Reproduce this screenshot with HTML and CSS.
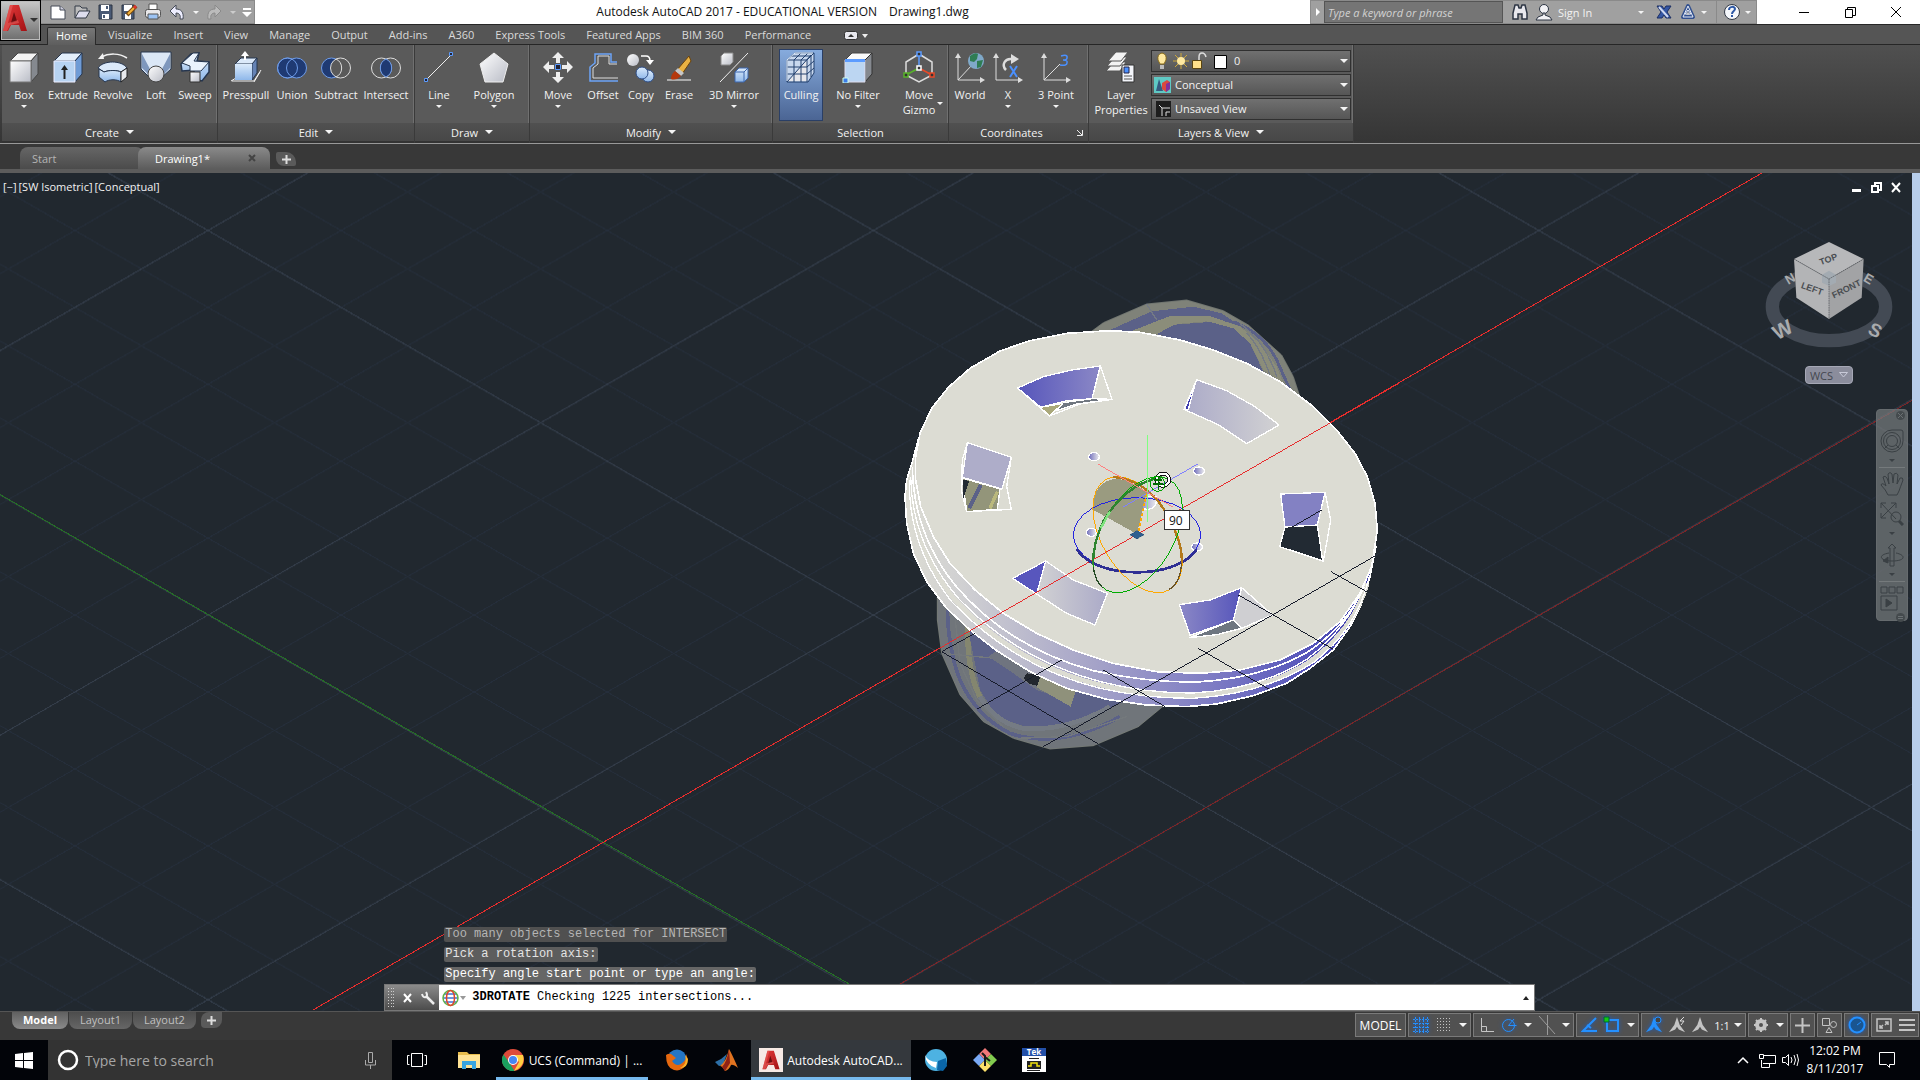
FILE: index.html
```html
<!DOCTYPE html>
<html lang="en">
<head>
<meta charset="utf-8">
<title>Autodesk AutoCAD 2017 - Drawing1.dwg</title>
<link rel="stylesheet" href="styles.css">
</head>
<body>
<svg class="defs" width="0" height="0" aria-hidden="true">
  <defs>
    <linearGradient id="grey" x1="0" y1="0" x2="1" y2="1"><stop offset="0" stop-color="#fff"/><stop offset="1" stop-color="#b9bcc6"/></linearGradient>
    <linearGradient id="blue" x1="0" y1="0" x2="0" y2="1"><stop offset="0" stop-color="#dcebfb"/><stop offset="1" stop-color="#8fb8ea"/></linearGradient>
    <linearGradient id="logo" x1="0" y1="0" x2="1" y2="1"><stop offset="0" stop-color="#e63a3a"/><stop offset="1" stop-color="#a31215"/></linearGradient>
    <symbol id="acad" viewBox="0 0 24 28"><path fill="url(#logo)" d="M7 1h9l8 26h-6l-2-6H8l-3 6H0z"/><path fill="#6d0d10" d="M11 8l3 9-6 2z"/><path fill="#ee6a66" d="M7 1h3L5 19l10-3 1 3-9 2-3 6H0z" opacity=".5"/></symbol>
    <symbol id="anno" viewBox="0 0 20 20"><path d="M10 1l3 9 6 8-7-3-2-3-2 3-7 3 6-8z"/></symbol>
  </defs>
</svg>
<div class="app">
  <header class="titlebar">
    <button class="app-menu" aria-label="Application menu"><svg width="24" height="28"><use href="#acad"/></svg><i class="tri dark"></i></button>
    <div class="quick">
      <button aria-label="New"><svg width="18" height="18" viewBox="0 0 18 18"><path fill="#fff" stroke="#444b57" d="M2 3h9l5 4v9H2z"/><path fill="#ccd" stroke="#444b57" d="M11 3v4h5"/></svg></button>
      <button aria-label="Open"><svg width="18" height="18" viewBox="0 0 18 18"><path fill="#bbb" stroke="#333a46" d="M2 15V3h5l2 2h5v3"/><path fill="#dde" stroke="#333a46" d="M2 15l4-7h11l-4 7z"/></svg></button>
      <button aria-label="Save"><svg width="18" height="18" viewBox="0 0 18 18"><path fill="#4a5a75" stroke="#2c3443" d="M3 2h13v14H3z"/><path fill="#fff" d="M5 2h8v6H5zM6 11h7v5H6z"/><path fill="#4a5a75" d="M10 3h2v3h-2zM7 12h2v3H7z"/></svg></button>
      <button aria-label="Save as"><svg width="18" height="18" viewBox="0 0 18 18"><path fill="#4a5a75" stroke="#2c3443" d="M2 2h12v14H2z"/><path fill="#fff" d="M4 2h8v6H4zM5 11h6v5H5z"/><path stroke="#7a4a10" stroke-width="4" d="M7 12l9-9"/><path stroke="#f3b33a" stroke-width="2" d="M8 11l6-6"/><path stroke="#d33" stroke-width="3" d="M14 5l2-2"/></svg></button>
      <button aria-label="Plot"><svg width="18" height="18" viewBox="0 0 18 18"><path fill="#fff" stroke="#555" d="M5 1h8v6H5z"/><rect x="1.500" y="6.500" width="15" height="8" rx="2" fill="#e8e8ea" stroke="#555"/><path fill="#9cc3f3" stroke="#555" d="M4 11h10v5H4z"/></svg></button>
      <button aria-label="Undo"><svg width="18" height="18" viewBox="0 0 18 18"><path fill="#eef" stroke="#444b57" d="M2 8l6-6v4c5 0 8 3 7 10h-3c1-4-1-6-4-6v4z"/></svg></button>
      <button class="slim" aria-label="Undo list"><i class="tri"></i></button>
      <button aria-label="Redo"><svg width="18" height="18" viewBox="0 0 18 18"><path fill="#bbb" stroke="#8a8a8a" d="M16 8l-6-6v4c-5 0-8 3-7 10h3c-1-4 1-6 4-6v4z"/></svg></button>
      <button class="slim" aria-label="Redo list"><i class="tri dim"></i></button>
      <button class="slim" aria-label="Customize toolbar"><svg width="10" height="9" viewBox="0 0 10 9"><path fill="#fff" d="M1 0h8v2H1zM0 4h10L5 9z"/></svg></button>
    </div>
    <h1 class="title">Autodesk AutoCAD 2017 - EDUCATIONAL VERSION<span>Drawing1.dwg</span></h1>
    <div class="info">
      <i class="tri right"></i>
      <input type="text" aria-label="Search help" placeholder="Type a keyword or phrase">
      <button aria-label="Search"><svg width="18" height="18" viewBox="0 0 18 18"><path fill="#e8e8ee" stroke="#2c3443" stroke-width="1.500" d="M4 2h3l1 3h2l1-3h3l2 8v6h-5v-5H7v5H2v-6z"/></svg></button>
      <button class="sign"><svg width="18" height="18" viewBox="0 0 18 18"><circle cx="9" cy="6" r="4.500" fill="#f1f1f5" stroke="#2c3443"/><path fill="#f1f1f5" stroke="#2c3443" d="M1 17l2-3 5-2v-2h2v2l5 2 2 3z"/></svg><span>Sign In</span><i class="tri"></i></button>
      <button aria-label="Exchange"><svg width="18" height="18" viewBox="0 0 18 18"><path fill="#3557a5" stroke="#1d2f63" d="M2 3h5l2 3 2-3h5l-4 6 4 6h-5l-2-3-2 3H2l4-6z"/><path stroke="#cfd9f2" stroke-width="2" d="M4 4l9 10"/></svg></button>
      <button class="with-list" aria-label="A360"><svg width="18" height="18" viewBox="0 0 18 18"><path fill="none" stroke="#33518f" stroke-width="4" stroke-linejoin="round" d="M9 3l5 11H4z"/><path fill="none" stroke="#e6ecf8" d="M9 3l5 11H4zM6 11l3-4 3 4z"/></svg><i class="tri"></i></button>
      <button class="with-list help" aria-label="Help"><svg width="18" height="18" viewBox="0 0 18 18"><circle cx="9" cy="9" r="7.500" fill="#f5f7fb" stroke="#333a46"/><path fill="none" stroke="#2c57a5" stroke-width="2" d="M6 7c0-4 6-4 6-1 0 2-3 2-3 5M9 12v2"/></svg><i class="tri"></i></button>
    </div>
    <div class="window-buttons">
      <button aria-label="Minimize"><svg width="11" height="11"><path stroke="#000" d="M0 5.500h10"/></svg></button>
      <button aria-label="Restore"><svg width="11" height="11"><path fill="none" stroke="#000" d="M.5 2.500h7v8h-7zM2.500 2V.5h8v8H8"/></svg></button>
      <button aria-label="Close"><svg width="11" height="11"><path stroke="#000" d="M0 0l10 10M10 0L0 10"/></svg></button>
    </div>
  </header>

  <nav class="ribbon-tabs" aria-label="Ribbon">
    <a class="active" href="#home">Home</a><a href="#visualize">Visualize</a><a href="#insert">Insert</a><a href="#view">View</a><a href="#manage">Manage</a><a href="#output">Output</a><a href="#addins">Add-ins</a><a href="#a360">A360</a><a href="#express">Express Tools</a><a href="#featured">Featured Apps</a><a href="#bim">BIM 360</a><a href="#performance">Performance</a>
    <button aria-label="Minimize ribbon"><svg width="24" height="10" viewBox="0 0 24 10"><rect x=".5" y=".5" width="13" height="8" rx="2" fill="#e8e8ee" stroke="#333"/><path fill="#333" d="M4 6h6L7 3z"/><path fill="#eee" d="M18 3h6l-3 4z"/></svg></button>
  </nav>

  <div class="ribbon">
    <section class="panel create">
      <div class="tools">
        <button><svg width="32" height="32" viewBox="0 0 32 32"><path fill="#f3f3f3" stroke="#444" d="M2 10l8-8h20l-7 8z"/><path fill="#85898f" stroke="#444" d="M23 10l7-8v21l-7 8z"/><path fill="url(#grey)" stroke="#777" d="M2 10h21v21H2z"/></svg>Box<i class="tri"></i></button>
        <button><svg width="32" height="32" viewBox="0 0 32 32"><path fill="#e3effc" stroke="#26364f" d="M2 10l8-8h20l-7 8z"/><path fill="#6f9bd6" stroke="#26364f" d="M23 10l7-8v21l-7 8z"/><path fill="#b7d3f2" stroke="#eef" d="M2 10h21v21H2z"/><path stroke="#222" stroke-width="2" d="M12.500 28V16"/><path fill="#222" d="M9 19l3.500-5 3.500 5z"/></svg>Extrude</button>
        <button><svg width="32" height="32" viewBox="0 0 32 32"><path fill="none" stroke="#f2f2f2" stroke-width="1.500" d="M4 6c8-4 18-4 26 1"/><path fill="#f2f2f2" d="M1 8l5-6 1 6z"/><path fill="#dbe9f9" stroke="#26364f" d="M1 17c5-8 24-8 29 0l-6 4c-4-2-12-2-17 0z"/><path fill="url(#blue)" stroke="#26364f" d="M2 18l5 3c5-2 13-2 17 0v10c-4-3-12-3-16 0l-6-5z"/><path fill="#e8eaee" stroke="#222" d="M24 21l6-4v9l-6 5z"/></svg>Revolve</button>
        <button><svg width="32" height="32" viewBox="0 0 32 32"><path fill="#dbe7f6" stroke="#26364f" d="M1 1h30v17l-10 9-5-10-6 10-9-9z"/><path fill="#7e97bd" d="M2 3l8 15-2 5-6-6zM30 3l-8 15 2 5 6-6z"/><circle cx="16" cy="23" r="8" fill="url(#grey)" stroke="#444"/></svg>Loft</button>
        <button><svg width="32" height="32" viewBox="0 0 32 32"><path fill="url(#blue)" stroke="#26364f" stroke-width="1.500" d="M2 13l10-10 8-1-2 8 12 1v10l-7 9-8-2v-9L3 20z"/><path fill="#eaf3fd" stroke="#26364f" d="M3 12L14 2h6l-5 8 15 1-8 9H11v-5z"/><path fill="url(#grey)" stroke="#333" d="M11 21h10v10H11z"/></svg>Sweep</button>
      </div>
      <button class="panel-title">Create<i class="tri big"></i></button>
    </section>
    <section class="panel edit">
      <div class="tools">
        <button><svg width="32" height="32" viewBox="0 0 32 32"><path fill="none" stroke="#f2f2f2" d="M1 30l5-3M2 30h22l7-11M24 31l6-10"/><path fill="#dbe9f9" stroke="#26364f" d="M5 13l6-6h16l-4 6z"/><path fill="#6583b5" stroke="#26364f" d="M22 13l5-6v15l-5 7z"/><path fill="url(#blue)" d="M5 13h17v16H5z"/><path stroke="#fff" stroke-width="2" d="M15 9V3"/><path fill="#fff" d="M11 5l4-5 4 5z"/></svg>Presspull</button>
        <button><svg width="32" height="32" viewBox="0 0 32 32"><g fill="#1f3a73" stroke="#6d9be8"><circle cx="11.500" cy="17" r="10"/><circle cx="20.500" cy="17" r="10"/></g><circle cx="11.500" cy="17" r="10" fill="none" stroke="#6d9be8"/></svg>Union</button>
        <button><svg width="32" height="32" viewBox="0 0 32 32"><circle cx="11.500" cy="17" r="10" fill="#1f3a73" stroke="#6d9be8"/><circle cx="20.500" cy="17" r="10" fill="#5a5a5a" stroke="#ddd"/><path fill="none" stroke="#ddd" d="M16 8a10 10 0 0 1 0 18"/></svg>Subtract</button>
        <button><svg width="32" height="32" viewBox="0 0 32 32"><g fill="none" stroke="#ddd"><circle cx="11.500" cy="17" r="10"/><circle cx="20.500" cy="17" r="10"/></g><path fill="#1f3a73" stroke="#6d9be8" d="M16 8a10 10 0 0 1 0 18a10 10 0 0 1 0-18"/></svg>Intersect</button>
      </div>
      <button class="panel-title">Edit<i class="tri big"></i></button>
    </section>
    <section class="panel draw">
      <div class="tools">
        <button><svg width="32" height="32" viewBox="0 0 32 32"><path stroke="#eee" d="M3 29L29 3"/><path fill="#223" stroke="#5c9cff" d="M1.500 27.500h3v3h-3zM26.500 1.500h3v3h-3z"/></svg>Line<i class="tri"></i></button>
        <button><svg width="32" height="32" viewBox="0 0 32 32"><path fill="url(#grey)" stroke="#eee" d="M16 2l14 11-5 18H7L2 13z"/></svg>Polygon<i class="tri"></i></button>
      </div>
      <button class="panel-title">Draw<i class="tri big"></i></button>
    </section>
    <section class="panel modify">
      <div class="tools">
        <button><svg width="32" height="32" viewBox="0 0 32 32"><path fill="#eee" d="M16 1l6 6h-4v5h-4V7h-4zM16 32l6-6h-4v-5h-4v5h-4zM1 16l6-6v4h5v4H7v4zM31 16l-6-6v4h-5v4h5v4z"/><path fill="#223" stroke="#5c9cff" d="M13.500 13.500h5v5h-5z"/></svg>Move<i class="tri"></i></button>
        <button><svg width="32" height="32" viewBox="0 0 32 32"><path fill="none" stroke="#6ca4f7" stroke-width="1.500" d="M30 11h-6V3H8v9l-5 4v14h28"/><path fill="none" stroke="#ddd" d="M30 13h-8V5H11v8l-5 4v10h25"/></svg>Offset</button>
        <button><svg width="32" height="32" viewBox="0 0 32 32"><circle cx="8" cy="9" r="6" fill="url(#grey)"/><path fill="none" stroke="#fff" stroke-width="1.500" d="M16 5h5q4 0 4 5"/><path fill="#fff" d="M21 9h8l-4 5z"/><g fill="url(#blue)" stroke="#2d4d86"><circle cx="23" cy="25" r="6"/><circle cx="17" cy="22" r="6"/></g></svg>Copy</button>
        <button><svg width="32" height="32" viewBox="0 0 32 32"><path stroke="#aaa" stroke-width="2" d="M4 29h24"/><path fill="#e9b243" stroke="#6b430a" d="M26 5l2 5-9 13-5-4z"/><path fill="#c6c6c6" d="M15 17l6 5-3 3-6-5z"/><path fill="#b5380d" d="M12 20l6 5q-5 5-10 3 0-5 4-8z"/></svg>Erase</button>
        <button><svg width="32" height="32" viewBox="0 0 32 32"><path stroke="#eee" d="M2 31L30 2"/><path fill="url(#grey)" stroke="#888" d="M3 5l3-3h9v9l-3 3H3z"/><path fill="url(#blue)" stroke="#3d66ad" d="M17 21l4-4h9v10l-4 4h-9zM17 21h9v10M26 21l4-4"/></svg>3D Mirror<i class="tri"></i></button>
      </div>
      <button class="panel-title">Modify<i class="tri big"></i></button>
    </section>
    <section class="panel selection">
      <div class="tools">
        <button class="pressed"><svg width="32" height="32" viewBox="0 0 32 32"><path fill="#c8d8ee" stroke="#23406e" d="M2 31V9l8-7h19v20l-6 9z"/><path fill="#e6e7ec" d="M3 30L22 9v21z"/><path fill="none" stroke="#23406e" d="M2 9h20v22M22 9l7-7M9 9v22M16 9v22M2 16h20M2 23h20M9 9l7-7M16 9l7-7M6 5h20v21M22 16l7-6M22 23l7-6M2 31L26 4"/><path fill="none" stroke="#e8f3ff" d="M2 30V9l8-7h18"/></svg>Culling</button>
        <button><svg width="32" height="32" viewBox="0 0 32 32"><path fill="#fafafa" stroke="#444" d="M3 9l7-7h20l-7 7z"/><path fill="#85898f" stroke="#333" d="M23 9l7-7v21l-7 8z"/><path fill="#bcd6f2" stroke="#dde" d="M3 9h20v22H3z"/><path fill="#5c9cff" d="M3 8h20v3H3z"/><path fill="#3d7ce8" stroke="#cfe" d="M1 27h5v5H1z"/></svg>No Filter<i class="tri"></i></button>
        <button class="side-list"><svg width="32" height="32" viewBox="0 0 32 32"><path fill="none" stroke="#ddd" stroke-width="1.500" d="M16 3l13 8v13l-13 7-13-7V11z"/><path stroke="#5c9cff" stroke-width="1.500" d="M16 4v12"/><path stroke="#58b32a" stroke-width="1.500" d="M16 17L3 24"/><path stroke="#e84a28" stroke-width="1.500" d="M16 17l13 7"/><g fill="#333" stroke-width="1.500"><path stroke="#5c9cff" d="M14 1h4v4h-4z"/><path stroke="#58b32a" d="M1 22h4v4H1z"/><path stroke="#e84a28" d="M27 22h4v4h-4z"/><path stroke="#fff" d="M14 15h4v4h-4z"/></g></svg>Move<br>Gizmo<i class="tri"></i></button>
      </div>
      <div class="panel-title">Selection</div>
    </section>
    <section class="panel coordinates">
      <div class="tools">
        <button><svg width="32" height="32" viewBox="0 0 32 32"><path fill="none" stroke="#ddd" d="M4 4v25h24M4 29l14-15"/><path fill="#ddd" d="M1 7h6L4 2zM26 26v6l5-3z"/><circle cx="22" cy="10" r="8" fill="#7fa9c9"/><path fill="#2f7d54" d="M16 5q5-4 8-2l-1 5-3 3-4-1zM23 10l6-1-2 7-4 1z"/></svg>World</button>
        <button><svg width="32" height="32" viewBox="0 0 32 32"><path fill="none" stroke="#ddd" d="M4 4v25h24"/><path fill="#ddd" d="M1 7h6L4 2zM26 26v6l5-3z"/><path fill="none" stroke="#ddd" stroke-width="2.500" d="M14 19c-5-5-1-12 6-11"/><path fill="#ddd" d="M19 3l8 5-8 5z"/><path stroke="#4a90ff" stroke-width="2" d="M18 15l7 11M25 15l-7 11"/></svg>X<i class="tri"></i></button>
        <button><svg width="32" height="32" viewBox="0 0 32 32"><path fill="none" stroke="#ddd" d="M4 4v25h24M4 29l16-16"/><path fill="#ddd" d="M1 7h6L4 2zM26 26v6l5-3z"/><path fill="none" stroke="#4a90ff" stroke-width="1.500" d="M21 5q7-2 6 2 0 2-4 2 5 0 4 3 0 3-7 2"/></svg>3 Point<i class="tri"></i></button>
      </div>
      <div class="panel-title">Coordinates<button class="launcher" aria-label="UCS settings"><svg width="6" height="6"><path fill="none" stroke="#eee" d="M0 0l5 5M5.500 0v5.500H0"/></svg></button></div>
    </section>
    <section class="panel layers">
      <div class="tools">
        <button><svg width="32" height="32" viewBox="0 0 32 32"><g fill="#f3f3f3" stroke="#555"><path d="M1 20l8-9h12l-6 9z"/><path d="M2 15l8-9h12l-7 9z"/><path d="M3 10l8-9h12l-7 9z"/></g><path fill="#f3f5fa" stroke="#333" d="M17 14h12v17H17z"/><path fill="#4a90ff" stroke="#224" d="M19 16h5v6h-5z"/><path stroke="#555" d="M19 25h8M19 28h8"/></svg>Layer<br>Properties</button>
        <div class="combos">
          <button class="combo" aria-label="Layer"><svg width="70" height="20" viewBox="0 0 70 20"><path fill="#ffe9a0" stroke="#8a6d1c" d="M8 2q5 1 4 7l-2 4H6L4 9q-1-6 4-7z"/><path fill="#bbb" d="M6 14h4v4H6z"/><path stroke="#cfa93a" d="M27 2v16M19 10h16M21 4l12 12M33 4L21 16"/><circle cx="27" cy="10" r="4" fill="#ffe9a0"/><path fill="#ffe08a" stroke="#5a4510" d="M38.500 9.500h9v8h-9z"/><path fill="none" stroke="#ddd" stroke-width="1.500" d="M45 9V6q0-4 3-4t4 4"/><path fill="#fff" stroke="#000" d="M60.500 4.500h12v13h-12z"/></svg><span>0</span><i class="tri big"></i></button>
          <button class="combo" aria-label="Visual style"><svg width="17" height="16" viewBox="0 0 17 16"><path fill="#5fc9c4" d="M0 0h17v16H0z"/><path fill="#35597f" d="M2 14l3-12 4 12z"/><path fill="#d9483f" d="M8 6l5-3 3 2v7l-4 3-4-3z"/><path fill="#7d2f9e" d="M12 7l4-2v7l-4 3z"/></svg><span>Conceptual</span><i class="tri big"></i></button>
          <button class="combo" aria-label="View"><svg width="17" height="16" viewBox="0 0 17 16"><path fill="#1d1d1d" d="M2 0h15v16H2z"/><path fill="none" stroke="#ddd" d="M5 4l3 3h8M8 7v8M12 15v-4h4"/></svg><span>Unsaved View</span><i class="tri big"></i></button>
        </div>
      </div>
      <button class="panel-title">Layers &amp; View<i class="tri big"></i></button>
    </section>
  </div>

  <nav class="file-tabs" aria-label="Drawings">
    <a href="#start">Start</a>
    <a class="active" href="#drawing1">Drawing1*<svg width="8" height="8"><path stroke="#444" stroke-width="2" d="M1 1l6 6M7 1L1 7"/></svg></a>
    <button aria-label="New drawing"><svg width="9" height="9"><path stroke="#ddd" stroke-width="2" d="M4.500 0v9M0 4.500h9"/></svg></button>
  </nav>

  <main class="canvas">
    <svg class="scene" viewBox="0 173 1912 838" preserveAspectRatio="xMidYMid slice" role="img" aria-label="Pulley wheel model">
      <defs>
        <pattern id="minor" patternUnits="userSpaceOnUse" x="208" y="230.500" width="133.080" height="76.920"><path stroke="#252e3b" d="M0 0L133.080 76.920M133.080 0L0 76.920"/></pattern>
        <pattern id="major" patternUnits="userSpaceOnUse" x="208" y="230.500" width="665.400" height="384.600"><path stroke="#343d49" d="M0 0L665.400 384.600M665.400 0L0 384.600"/></pattern>
        <linearGradient id="rim" gradientUnits="userSpaceOnUse" x1="80" y1="0" x2="1490" y2="0"><stop offset="0" stop-color="#dcdcd3"/><stop offset=".12" stop-color="#d0d0d2"/><stop offset=".4" stop-color="#a5a3c8"/><stop offset=".65" stop-color="#7e7cc4"/><stop offset=".85" stop-color="#5655bb"/><stop offset="1" stop-color="#403fae"/></linearGradient>
        <linearGradient id="h1"><stop offset="0" stop-color="#5655bb"/><stop offset="1" stop-color="#8b88c6"/></linearGradient>
        <linearGradient id="h2"><stop offset="0" stop-color="#abaac8"/><stop offset="1" stop-color="#d2d2d3"/></linearGradient>
        <linearGradient id="h3"><stop offset="0" stop-color="#d2d2d3"/><stop offset="1" stop-color="#abaac8"/></linearGradient>
        <linearGradient id="h4"><stop offset="0" stop-color="#8b88c6"/><stop offset="1" stop-color="#5655bb"/></linearGradient>
        <linearGradient id="pin"><stop offset="0" stop-color="#6f6dbb"/><stop offset="1" stop-color="#eeeeee"/></linearGradient>
      </defs>
      <rect y="173" width="1912" height="838" fill="url(#minor)"/>
      <rect y="173" width="1912" height="838" fill="url(#major)"/>
      <path stroke="#257025" d="M0 494.500L896 1011"/>
      <path stroke="#7b2528" d="M855 1010L1912 400.400"/>
      <path stroke="#e82c2c" d="M313 1010L1762 173"/>
      <g transform="translate(880 280) scale(.33333)">
        <g stroke-linejoin="round">
          <path fill="#7f8279" stroke="#6f746f" stroke-width="3" d="M620 165L670 128 800 72 920 60 1030 92 1105 135 1205 225 1240 290 1258 345 900 300z"/>
          <path fill="#5b6188" d="M690 150L815 94 940 80 1025 100 1085 140 1040 125 920 118 860 125 790 157z"/>
          <path fill="#8b8d7a" d="M750 155L870 108 990 108 1080 140 1140 190 1190 260 1210 310 1150 270 1110 190 1060 145 980 124 890 132 830 162z"/>
          <path fill="#5b6188" d="M830 162L885 134 990 126 1060 145 1110 190 1150 275 1165 290 1000 215z"/>
          <path fill="none" stroke="#5b6188" stroke-width="9" d="M1060 125Q1150 160 1190 240L1228 325"/>
          <path fill="none" stroke="#747a85" stroke-width="4" d="M800 72L830 120M1080 130Q1160 190 1190 290M1100 160Q1140 200 1170 285"/>
          <path fill="#70757a" stroke="#747974" stroke-width="3" d="M172 950V1020L185 1120 240 1245 310 1325 400 1375 510 1407 640 1397 775 1340 860 1270 600 1150z"/>
          <path fill="#5b6188" d="M255 1000L285 1150 300 1230 350 1310 450 1345 560 1335 640 1310 740 1260 400 1050z"/>
          <path fill="none" stroke="#84866f" stroke-width="16" d="M262 1030Q262 1180 300 1250"/>
          <path fill="none" stroke="#757b84" stroke-width="14" d="M300 1250Q350 1330 430 1345 560 1355 690 1280"/>
          <path fill="none" stroke="#5b6188" stroke-width="11" d="M202 990Q205 1110 240 1200 290 1310 390 1360 540 1410 720 1310"/>
          <path fill="none" stroke="#74797c" stroke-width="4" d="M225 1010L240 1150 290 1260 370 1340M185 1120L400 1140M410 1375L560 1370 740 1310"/>
          <path fill="#6f747f" d="M325 1130L375 1095 580 1230 560 1260 470 1230 400 1180z"/>
          <path fill="#8f917b" d="M480 1180L590 1225 572 1280 470 1222z"/><path fill="#22272e" d="M430 1195L440 1180 482 1185 472 1218 445 1210z"/>
          <path fill="url(#rim)" stroke="#fff" stroke-width="5" d="M116 475L97 545 80 600 75 650 80 730 100 820 140 905 200 985 270 1050 350 1112 450 1175 560 1225 680 1258 800 1275 920 1280 1010 1272 1120 1247 1220 1210 1290 1165 1360 1110 1410 1040 1445 970 1470 890 1488 800 1200 900 400 800z"/>
          <path fill="none" stroke="#dcdcd3" stroke-width="14" d="M88 620Q95 800 225 960 400 1150 660 1215 800 1248 940 1247 1150 1235 1290 1145 1420 1050 1462 910"/>
          <path fill="none" stroke="#fff" stroke-width="4" d="M88 600Q85 800 215 965 400 1160 660 1225 800 1256 940 1255 1150 1242 1300 1148 1430 1050 1468 890M92 590Q95 790 235 955 410 1140 670 1207 800 1240 940 1239 1140 1228 1280 1138 1410 1040 1458 900"/>
          <path fill="none" stroke="#fff" stroke-width="5" d="M97 560Q100 760 225 915 380 1100 640 1172 800 1208 950 1206 1140 1196 1280 1118 1400 1040 1452 920"/>
          <path fill="#dcdcd3" stroke="#fff" stroke-width="5" d="M690 152L560 160 450 182 360 213 270 265 205 322 155 385 120 460 107 530 107 600 122 680 160 770 210 850 285 930 370 1000 470 1060 580 1110 700 1150 830 1175 960 1180 1080 1170 1200 1140 1300 1090 1380 1025 1440 940 1475 860 1492 750 1485 670 1462 590 1425 520 1370 450 1300 380 1200 305 1100 250 1000 210 900 180 780 157z"/>
        </g>
        <g stroke="#fff" stroke-width="4" stroke-linejoin="round">
          <path fill="#dcdcd3" d="M413 324L490 290 575 270 661 258 696 358 600 372 508 408z"/><path fill="#aaa87a" d="M480 382L550 370 508 407z"/><path fill="#707780" d="M550 368L636 356 696 358 590 372 530 392z"/><path fill="url(#h1)" d="M413 324L490 290 575 270 661 258 636 356 560 362 482 382z"/>
          <path fill="url(#h2)" d="M950 299L1040 332 1125 380 1197 435 1100 491 1015 434 912 388z"/><path fill="#403fae" d="M945 312L914 387 925 389z"/>
          <path fill="#dcdcd3" d="M262 488L394 532 380 620 394 688 260 695 244 630 247 540z"/><path fill="#93957a" d="M247 594L360 627 352 688 260 695z"/><path fill="#222a33" stroke="none" d="M248 598L268 603 250 655z"/><path stroke="#5b6188" stroke-width="12" d="M302 615L268 685"/><path stroke="#bab87c" stroke-width="10" d="M352 635L330 685"/><path fill="#aeadc9" d="M262 488L394 532 366 627 247 592z"/>
          <path fill="#dcdcd3" d="M1202 642L1335 637 1352 720 1330 844 1199 800 1215 740z"/><path fill="#222a33" d="M1215 740L1312 735 1328 842 1199 800z"/><path fill="#8381c3" d="M1202 642L1335 637 1312 735 1215 741z"/>
          <path fill="#5856bd" d="M398 895L497 843 470 942z"/><path fill="url(#h3)" d="M497 843L580 900 682 940 645 1035 560 1000 470 942z"/>
          <path fill="#cfcfd2" d="M1085 923L1178 1005 1085 1045 1060 1020z"/><path fill="#6e7680" d="M930 1073L1060 1020 1085 1045 1010 1064z"/><path fill="url(#h4)" d="M898 974L990 960 1085 923 1060 1020 930 1066z"/>
          <g fill="url(#pin)"><ellipse cx="642" cy="530" rx="16" ry="12"/><ellipse cx="957" cy="573" rx="16" ry="12"/><ellipse cx="634" cy="757" rx="15" ry="12"/><ellipse cx="951" cy="801" rx="16" ry="12"/><path d="M765 650H830Q832 688 800 688 768 685 765 650z"/></g>
        </g>
        <path fill="none" stroke="#171c2b" stroke-width="3" d="M490 1400L1485 828M290 1288L545 1140M185 1115L285 1060M1235 742L1325 690M185 1115L655 1392M670 1170L855 1280M955 1105L1168 1228M1075 945L1360 1108M1353 875L1460 935"/>
        <path stroke="#e82c2c" stroke-width="3" d="M0 1208L1560 308"/>
        <path fill="#9a9b80" d="M771 762L637 688A191 109 60 0 1 800 637z"/>
        <g fill="none" stroke-width="3">
          <ellipse cx="771" cy="765" rx="191" ry="112" stroke="#2424e0"/><path stroke="#2f2f94" stroke-width="8" d="M590 808C650 900 890 900 950 808"/>
          <ellipse cx="773" cy="764" rx="191" ry="109" transform="rotate(60 773 764)" stroke="#ffa800"/><path stroke="#b4791b" stroke-width="7" d="M700 591Q810 600 870 720 910 800 905 850"/><path stroke="#6c5426" stroke-width="4" d="M905 850Q900 910 868 928"/>
          <ellipse cx="773" cy="764" rx="191" ry="109" transform="rotate(-60 773 764)" stroke="#00ac00"/><path stroke="#2d842f" stroke-width="7" d="M846 591Q740 610 672 720 638 790 639 855"/><path stroke="#7fe27f" stroke-width="7" d="M690 694L662 745"/><path stroke="#244a24" stroke-width="4" d="M640 860Q645 905 670 925"/>
          <path stroke="#80ff80" d="M802 465V725"/><path stroke="#ff8080" d="M655 553L880 682"/><path stroke="#8080ff" d="M730 681L953 552"/><path stroke="#ffa800" stroke-width="5" stroke-dasharray="10 5" d="M800 640L774 762"/>
          <circle cx="849" cy="599" r="19" stroke="#fff" stroke-width="9"/><circle cx="849" cy="599" r="23" stroke="#111" stroke-width="3"/><circle cx="849" cy="599" r="14" stroke="#111" stroke-width="3"/>
          <circle cx="833" cy="612" r="22" stroke="#00a000"/><path stroke="#006c00" stroke-width="4" d="M822 600H845M820 612H850M835 592V630"/>
        </g>
        <path fill="#2e5f8f" stroke="#24466a" d="M749 764L771 752 793 764 771 777z"/>
      </g>
    </svg>
    <div class="view-label"><button>[−]</button><button>[SW Isometric]</button><button>[Conceptual]</button></div>
    <input class="angle" type="text" aria-label="Rotation angle" value="90">
    <div class="doc-buttons">
      <button aria-label="Minimize drawing"><svg width="11" height="11"><path fill="#fff" d="M1 7h9v3H1z"/></svg></button>
      <button aria-label="Restore drawing"><svg width="11" height="11"><path fill="none" stroke="#fff" stroke-width="2" d="M1 4h6v6H1zM4 3V1h6v7H8"/></svg></button>
      <button aria-label="Close drawing"><svg width="11" height="11"><path stroke="#fff" stroke-width="2" d="M1 1l8 9M9 1L1 10"/></svg></button>
    </div>
    <svg class="viewcube" width="134" height="112" viewBox="126 54 402 336" role="img" aria-label="View cube">
      <ellipse cx="327" cy="260" rx="170" ry="102" fill="none" stroke="#434a54" stroke-width="40"/>
      <g class="compass"><text x="210" y="190" font-size="40" transform="rotate(-30 210 176)">N</text><text x="446" y="190" font-size="40" transform="rotate(30 446 176)">E</text><text x="188" y="350" font-size="62" transform="rotate(-28 188 330)">W</text><text x="466" y="350" font-size="56" transform="rotate(28 466 330)">S</text></g>
      <path fill="#22282f" d="M222 115L327 66 431 115 425 233 327 296 229 233z"/>
      <path fill="#b7b8ba" d="M222 117L327 66 431 117 327 177z"/><path fill="#b3b4b6" d="M222 117L327 177V297L229 233z"/><path fill="#a2a3a5" d="M431 117L327 177V297L425 233z"/>
      <path fill="#a3abb2" d="M306 164L327 152 348 164V188L327 198 306 188z"/><path fill="none" stroke="#4d5054" stroke-width="2" stroke-dasharray="5 2" d="M222 117L327 177 431 117M327 177V297"/>
      <g class="face"><text x="325" y="127" transform="rotate(-20 325 117)">TOP</text><text x="276" y="215" transform="rotate(20 276 206)">LEFT</text><text x="379" y="216" transform="rotate(-26 379 207)">FRONT</text></g>
    </svg>
    <button class="wcs">WCS<svg width="9" height="6"><path fill="none" stroke="#c8cad8" d="M.5.500h8L4.500 5z"/></svg></button>
    <div class="navbar">
      <button class="tiny" aria-label="Close navigation bar"><svg width="9" height="9"><circle cx="4.500" cy="4.500" r="4.500" fill="#444a4d"/><path stroke="#6a7073" d="M2 2l5 5M7 2L2 7"/></svg></button>
      <button aria-label="Steering wheel"><svg width="24" height="24" viewBox="0 0 24 24"><path d="M12 1h9q2 0 2 2v9a11 11 0 1 1-11-11z"/><circle cx="12" cy="12" r="5.500"/><circle cx="12" cy="12" r="8.500"/><path d="M4 20l4-4M20 20l-4-4"/></svg><i class="tri"></i></button>
      <button class="ruled" aria-label="Pan"><svg width="24" height="26" viewBox="0 0 24 26"><path d="M8 24Q6 19 1 14q1-3 5 1L3 6q2-2 4 1l2 6-1-10q2-3 4 0l1 9 1-9q3-2 4 1l-1 9 3-6q3-1 3 2-3 8-4 11l-2 4z"/></svg></button>
      <button aria-label="Zoom"><svg width="24" height="24" viewBox="0 0 24 24"><path d="M1 1l15 16M16 1L1 16M1 6V1h5M11 1h5v5M1 11v5h5"/><circle cx="16" cy="15" r="5"/><path stroke-width="3" d="M19 19l4 4"/></svg><i class="tri"></i></button>
      <button aria-label="Orbit"><svg width="24" height="24" viewBox="0 0 24 24"><path d="M10 23V5H8l4-4 4 4h-2v18z"/><path d="M9 10c-12 2-9 8 3 8 14 0 14-6 4-8"/><path fill="#3a4044" d="M8 14v6l-5-2z"/></svg><i class="tri"></i></button>
      <button class="ruled" aria-label="Show motion"><svg width="24" height="26" viewBox="0 0 24 26"><path d="M1 2h6v6H1zM9 2h6v6H9zM17 2h6v6h-6zM1 11h16v14H1z"/><path fill="#3a4044" d="M6 14l6 4-6 4z"/></svg></button>
      <button class="tiny" aria-label="Navigation bar options"><svg width="9" height="9"><circle cx="4.500" cy="4.500" r="4.500" fill="#444a4d"/><path stroke="#6a7073" d="M2 3.500h5M2 5.500h5"/></svg></button>
    </div>
    <div class="command">
      <p class="old">Too many objects selected for INTERSECT</p>
      <p>Pick a rotation axis:</p>
      <p class="new">Specify angle start point or type an angle:</p>
      <div class="command-line">
        <div class="command-tools">
          <svg width="6" height="20"><path stroke="#ccc" stroke-width="1" stroke-dasharray="1 2" d="M.5 0v20M3.500 0v20M5.500 0v20"/></svg>
          <button aria-label="Close command line"><svg width="9" height="10"><path stroke="#fff" stroke-width="2" d="M1 1l7 8M8 1L1 9"/></svg></button>
          <button aria-label="Customize"><svg width="14" height="14" viewBox="0 0 14 14"><path stroke="#eee" stroke-width="2.500" d="M5 5l8 8"/><path fill="none" stroke="#eee" stroke-width="2" d="M1 3q1 4 4 3 2-2 0-5"/></svg></button>
        </div>
        <svg width="24" height="18" viewBox="0 0 24 18"><g fill="none" stroke-width="1.500"><path stroke="#3d74d8" d="M1 9h15M2 5h13M2 13h13"/><circle cx="8.500" cy="9" r="7.500" stroke="#5fb24a"/><ellipse cx="8.500" cy="9" rx="4" ry="7.500" stroke="#e0452c"/></g><path fill="#999" d="M18 7h6l-3 4z"/></svg>
        <output><b>3DROTATE</b> Checking 1225 intersections...</output>
        <button aria-label="Command history"><i class="tri up"></i></button>
      </div>
    </div>
  </main>

  <footer class="status">
    <nav class="layout-tabs" aria-label="Layouts"><a class="active" href="#model">Model</a><a href="#layout1">Layout1</a><a href="#layout2">Layout2</a><button aria-label="New layout"><svg width="9" height="9"><path stroke="#ddd" stroke-width="2" d="M4.500 0v9M0 4.500h9"/></svg></button></nav>
    <div class="toggles">
      <div class="group"><button class="model">MODEL</button></div>
      <div class="group"><button aria-label="Grid"><svg width="16" height="16" class="on"><path d="M2.500 0v16M6.500 0v16M10.500 0v16M14.500 0v16M0 2.500h16M0 6.500h16M0 10.500h16M0 14.500h16" stroke-dasharray="2 1"/></svg></button><button aria-label="Snap"><svg width="16" height="16"><path stroke-dasharray="1 2" d="M1 1.500h14M1 4.500h14M1 7.500h14M1 10.500h14M1 13.500h14"/></svg></button><button class="list" aria-label="Snap options"><i class="tri big"></i></button></div>
      <div class="group"><button aria-label="Ortho"><svg width="16" height="16"><path d="M3.500 1v13.500H16M3.500 9.500h5v5"/></svg></button><button aria-label="Polar tracking"><svg width="16" height="16" class="on"><circle cx="7.500" cy="8.500" r="6"/><path d="M7.500 8.500h8M7.500 8.500L13 2"/></svg></button><button class="list" aria-label="Polar options"><i class="tri big"></i></button><button aria-label="Isodraft"><svg width="18" height="20" class="dimmed"><path d="M1 1l16 18M9.500 0v20"/></svg></button><button class="list" aria-label="Isodraft options"><i class="tri big"></i></button></div>
      <div class="group"><button aria-label="Object snap tracking"><svg width="16" height="16" class="on"><path stroke-width="2" d="M15 1L2 14h14M6 8l4 3"/></svg></button><button aria-label="Object snap"><svg width="18" height="18" class="on"><path stroke-width="2" d="M5 4h10v11H4V4"/><path fill="#1c1" stroke="#063" d="M1 1h5v5H1z"/></svg></button><button class="list" aria-label="Object snap options"><i class="tri big"></i></button></div>
      <div class="group"><button aria-label="Annotation visibility"><svg width="18" height="18" class="solid on"><use href="#anno"/><circle cx="13" cy="4" r="3" fill="#444" stroke="#2490ff"/></svg></button><button aria-label="Auto scale"><svg width="18" height="18" class="solid"><use href="#anno"/><path d="M16 1l-4 4h4l-3 4" fill="none" stroke="#ddd"/></svg></button><button aria-label="Annotation scale"><svg width="18" height="18" class="solid"><use href="#anno"/></svg></button><button class="scale">1:1<i class="tri big"></i></button></div>
      <div class="group"><button aria-label="Workspace"><svg width="16" height="16"><circle cx="8" cy="8" r="4" stroke-width="4"/><path stroke-width="2" d="M8 1v2M8 13v2M1 8h2M13 8h2M3 3l2 2M11 11l2 2M13 3l-2 2M5 11l-2 2"/></svg></button><button class="list" aria-label="Workspace options"><i class="tri big"></i></button></div>
      <div class="group"><button aria-label="Annotation monitor"><svg width="15" height="15"><path stroke-width="2" d="M7.500 0v15M0 7.500h15"/></svg></button></div>
      <div class="group"><button aria-label="Isolate objects"><svg width="17" height="17"><path d="M1.500 1.500h7v7h-7zM5 15.500l3-5 3 5z"/><circle cx="12.500" cy="7.500" r="3"/></svg></button></div>
      <div class="group"><button aria-label="Hardware acceleration"><svg width="18" height="18" class="on"><circle cx="9" cy="9" r="7.500" fill="#1a5590" stroke-width="2"/><path d="M9 9l4-3"/></svg></button></div>
      <div class="group"><button aria-label="Clean screen"><svg width="16" height="14"><path stroke-width="1.500" d="M1 1h14v12H1zM4 7v3h3M9 4h3v3M4 10l3-3M12 4L9 7"/></svg></button><button aria-label="Customization"><svg width="16" height="14"><path stroke-width="2" d="M0 2h16M0 7h16M0 12h16"/></svg></button></div>
    </div>
  </footer>

  <div class="taskbar">
    <button class="start" aria-label="Start"><svg width="18" height="17"><path fill="#fff" d="M0 2l8-1v7H0zM9 1l9-1v8H9zM0 9h8v7l-8-1zM9 9h9v8l-9-1z"/></svg></button>
    <label class="search"><svg width="22" height="22"><circle cx="11" cy="11" r="9" fill="none" stroke="#fff" stroke-width="2.500"/></svg><input type="text" placeholder="Type here to search" aria-label="Type here to search"><svg width="12" height="18"><path fill="none" stroke="#aaa" d="M3.500 1.500h4v10h-4zM.5 9v5h10V9M5.500 14v4"/></svg></label>
    <button class="app-icon" aria-label="Task view"><svg width="20" height="16"><path fill="none" stroke="#fff" d="M4.500 1.500h11v13h-11zM2.500 3.500H.5v9h2M17.500 3.500h2v9h-2"/></svg></button>
    <button class="app-icon wide-icon" aria-label="File Explorer"><svg width="22" height="20"><path fill="#e8bd4e" d="M0 2h9l2 2h11v14H0z"/><path fill="#ffe395" d="M0 5h22v13H0z"/><path fill="#39a5e0" d="M4 11h14v8h-4v-4H8v4H4z"/></svg></button>
    <button class="task"><svg width="22" height="22"><circle cx="11" cy="11" r="11" fill="#dd4b39"/><path fill="#1aa15f" d="M1.500 5.500L7.500 14l5 8A11 11 0 0 1 1.500 5.500z"/><path fill="#ffce42" d="M11 6h10q3 11-9 16l5-9z"/><circle cx="11" cy="11" r="5" fill="#fff"/><circle cx="11" cy="11" r="4" fill="#4587f3"/></svg><span>UCS (Command) | ...</span></button>
    <button class="app-icon gap" aria-label="Firefox"><svg width="24" height="24"><circle cx="12" cy="11" r="9.500" fill="#2476c5"/><path fill="#e5680f" d="M1 7q3-2 5-1l5 4-4 3q4 6 9 3 6-4 5-10 3 6 0 11-5 7-12 5-8-2-8-15z"/><path fill="#f9b32b" d="M20 7q3 9-5 13 8 0 8-9z"/></svg></button>
    <button class="app-icon" aria-label="MATLAB"><svg width="24" height="22"><path fill="#2d70a8" d="M0 13l6-3 6-5-4 11-4 1z"/><path fill="#e07320" d="M14 0q3 5 9 19-5-4-7-3-2 5-6 6-3-5-5-5 6-4 9-17z"/><path fill="#8f2116" d="M14 0l1 14-5 8-3-4q5-5 7-18z"/></svg></button>
    <button class="task active"><svg width="24" height="32" viewBox="0 0 24 32"><path fill="#f6e9e6" d="M0 4h24v24H0z"/><svg x="3" y="6" width="18" height="20"><use href="#acad"/></svg></svg><span>Autodesk AutoCAD...</span></button>
    <button class="app-icon" aria-label="Browser"><svg width="24" height="24"><circle cx="12" cy="12" r="11" fill="#4db2e2"/><path fill="#fff" d="M1 7q3 7 12 7l-1 6Q2 17 1 7z"/><path fill="#0a66a8" d="M14 13l8-3 1 8-4 5-6-1z"/></svg></button>
    <button class="app-icon" aria-label="Git GUI"><svg width="24" height="24"><path fill="#f07878" d="M12 0l6 6-6 6-6-6z"/><path fill="#79a9f5" d="M6 6l6 6-6 6-6-6z"/><path fill="#82cc4f" d="M18 6l6 6-6 6-6-6z"/><path fill="#fbe06b" d="M12 12l6 6-6 6-6-6z"/><path fill="none" stroke="#1a1a1a" stroke-width="2" d="M9 5l3 3v10M12 9l5 4"/></svg></button>
    <button class="app-icon" aria-label="Tek"><svg class="tek-icon" width="24" height="24"><path fill="#fff" d="M0 0h24v24H0z"/><path fill="#2350a8" d="M0 0h24v8H0z"/><text x="12" y="7">Tek</text><path stroke="#222" d="M7 10.500h10M5 22.500h13"/><path fill="#222" d="M5 13h14v8H5z"/><path fill="none" stroke="#f2e20c" stroke-width="1.500" d="M6 18h3v-3h6v3h3"/></svg></button>
    <div class="tray">
      <button aria-label="Show hidden icons"><svg width="12" height="8"><path fill="none" stroke="#fff" stroke-width="1.500" d="M1 7l5-5 5 5"/></svg></button>
      <button aria-label="Network"><svg width="17" height="15"><path fill="none" stroke="#fff" d="M4.500 2.500h12v8H4M2.500 7v7.500h8M10.500 11v3.500M.5 1.500h4v4h-4z"/></svg></button>
      <button aria-label="Volume"><svg width="18" height="14"><path fill="none" stroke="#fff" d="M.5 4.500h3l3-3v11l-3-3h-3zM9 4q2 3 0 6M12 2q3 5 0 10M15 1q3 6 0 12"/></svg></button>
      <button class="clock"><time>12:02 PM</time><time>8/11/2017</time></button>
      <button class="notes" aria-label="Notifications"><svg width="17" height="17"><path fill="none" stroke="#fff" d="M.5.500h15v12h-5v3l-3-3h-7z"/></svg></button>
    </div>
  </div>
</div>
</body>
</html>
```
FILE: styles.css
```css
* { box-sizing: border-box; }
body { margin: 0; background: #383838; color: #f2f2f2; font: 11px/15px "Open Sans", "Noto Sans", sans-serif; }
button, input { font: inherit; color: inherit; background: none; border: 0; padding: 0; margin: 0; }
a { color: inherit; text-decoration: none; }
svg { flex: none; }
.defs { position: absolute; }
.app { display: flex; flex-direction: column; min-height: 100vh; }

.tri { display: inline-block; flex: none; border: solid transparent; border-width: 3px 3px 0; border-top-color: #f4f4f4; }
.tri.big { border-width: 4px 4px 0; }
.tri.dark { border-top-color: #333; }
.tri.dim { border-top-color: #ccc; }
.tri.right { border-width: 4px 0 4px 4px; border-color: transparent transparent transparent #fff; }
.tri.up { border-width: 0 3px 4px; border-color: transparent transparent #222; }

/* title bar */
.titlebar { display: flex; height: 24px; background: #fff; position: relative; z-index: 2; }
.titlebar button { display: flex; align-items: center; justify-content: center; }
.titlebar .app-menu { width: 41px; height: 41px; flex: none; gap: 3px; align-items: flex-start; padding-top: 3px; background: linear-gradient(#c8c8c8, #6e6e6e); border: 1px solid #000; box-shadow: inset 0 0 0 1px #bbb; }
.app-menu .tri { border-width: 4px 4px 0; margin-top: 14px; }
.quick { display: flex; align-items: center; width: 214px; padding-left: 5px; background: #a0a0a0; border: 1px solid #8a8a8a; border-left: 0; }
.quick button { width: 24px; }
.quick .slim { width: 14px; }
.title { flex: 1; margin: 0; color: #111; font-size: 12px; font-weight: 400; line-height: 23px; text-align: center; white-space: nowrap; }
.title span { margin-left: 12px; }
.info { display: flex; align-items: center; width: 447px; background: #a0a0a0; border: 1px solid #8a8a8a; padding-left: 5px; }
.info input { width: 180px; height: 22px; margin: 0 4px; padding: 0 3px; background: #757575; border: 1px solid #555; font-style: italic; }
.info input::placeholder { color: #d2d2d2; opacity: 1; }
.info button { width: 25px; height: 22px; }
.info .sign { width: 120px; gap: 5px; justify-content: flex-start; padding-left: 3px; }
.sign .tri { margin-left: auto; margin-right: 7px; }
.info .with-list { width: 34px; gap: 4px; }
.info .help { width: 40px; border-left: 1px solid #8a8a8a; margin-left: 6px; }
.window-buttons { display: flex; width: 163px; padding-left: 25px; gap: 1px; }
.window-buttons button { width: 45px; }

/* ribbon */
.ribbon-tabs { display: flex; gap: 1px; height: 21px; padding-left: 47px; padding-top: 2px; background: #555; border-top: 1px solid #262626; border-bottom: 1px solid #262626; color: #dadada; line-height: 16px; }
.ribbon-tabs a { padding: 0 10px; white-space: nowrap; }
.ribbon-tabs .active { padding: 0 8px; margin-right: 1px; color: #fff; background: linear-gradient(#777, #5e5e5e); border: 1px solid #2a2a2a; border-bottom: 0; border-radius: 2px 2px 0 0; height: 18px; line-height: 15px; }
.ribbon-tabs button { margin-left: 22px; display: flex; align-items: center; }
.ribbon { display: flex; height: 99px; padding-left: 2px; background: linear-gradient(#505050, #353535); border-bottom: 1px solid #989898; }
.panel { display: flex; flex-direction: column; background: #5a5a5a; border-right: 1px solid #3a3a3a; box-shadow: inset -1px 0 #707070; flex: none; }
.tools { display: grid; flex: 1; padding-top: 4px; }
.tools > button { display: flex; flex-direction: column; align-items: center; white-space: nowrap; height: 72px; padding-top: 2px; line-height: 15px; position: relative; }
.tools > button svg { margin-bottom: 4px; }
.tools > button .tri { margin-top: 3px; }
.tools .side-list .tri { position: absolute; right: 2px; top: 50px; }
.tools .pressed { background: linear-gradient(#86abdd, #4b6594); border: 1px solid #2a3f66; padding-top: 1px; }
.panel-title { height: 20px; display: flex; align-items: center; justify-content: center; gap: 7px; background: linear-gradient(#505050, #474747); border-bottom: 2px solid #333; position: relative; }
.coordinates .panel-title { padding-right: 14px; }
.launcher { position: absolute; right: 5px; top: 4px; display: flex; padding: 3px 0; }
.create { width: 216px; }
.create .tools { grid-template-columns: 44px 44px 46px 40px 38px; }
.edit { width: 197px; }
.edit .tools { grid-template-columns: 48px 44px 44px 56px; padding-left: 4px; }
.draw { width: 115px; }
.draw .tools { grid-template-columns: 48px 62px; }
.modify { width: 243px; }
.modify .tools { grid-template-columns: 48px 42px 34px 42px 68px; padding-left: 4px; }
.selection { width: 176px; }
.selection .tools { grid-template-columns: 44px 70px 52px; padding-left: 6px; }
.coordinates { width: 140px; }
.coordinates .tools { grid-template-columns: 42px 34px 62px; }
.layers { width: 265px; }
.layers .tools { grid-template-columns: 60px 200px; padding-left: 2px; }
.combos { display: flex; flex-direction: column; gap: 2px; padding-top: 1px; }
.combo { display: flex; align-items: center; gap: 4px; height: 22px; padding: 0 2px 1px; background: linear-gradient(#707070, #565656); border: 1px solid #303030; }
.combo svg { overflow: visible; }
.combo span { flex: 1; text-align: left; }
.combo:first-child { gap: 10px; }

/* drawing tabs */
.file-tabs { display: flex; height: 29px; padding: 3px 0 0 20px; background: #383838; border-bottom: 4px solid #5c5c5c; }
.file-tabs a { display: flex; align-items: center; justify-content: space-between; width: 124px; height: 22px; padding-left: 12px; color: #b4b4b4; background: linear-gradient(#666, #4b4b4b); border-radius: 8px 8px 0 0; }
.file-tabs .active { width: 132px; margin-left: -6px; padding: 0 14px 0 17px; color: #fff; background: linear-gradient(#8a8a8a, #5c5c5c); }
.file-tabs button { width: 20px; height: 14px; margin: 5px 0 0 6px; background: #5a5a5a; border-radius: 2px 10px 2px 8px; display: flex; align-items: center; justify-content: center; }

/* drawing area */
.canvas { position: relative; flex: 1; min-height: 480px; background: #21282f; border-right: 8px solid #b7cdea; overflow: hidden; }
.scene { position: absolute; inset: 0; width: 100%; height: 100%; shape-rendering: crispEdges; }
.view-label { position: absolute; left: 3px; top: 6px; display: flex; gap: 2px; }
.angle { position: absolute; left: 1164px; top: 337px; width: 26px; height: 20px; padding-left: 4px; background: #fff; border: 1px solid #333; color: #111; font-size: 12px; }
.doc-buttons { position: absolute; right: 10px; top: 9px; display: flex; gap: 9px; }
.doc-buttons button { display: flex; }
.viewcube { position: absolute; right: 16px; top: 65px; }
.viewcube text { text-anchor: middle; font-family: "Liberation Sans", sans-serif; font-weight: 700; }
.compass { fill: #a9abad; }
.face { fill: #4a4d51; font-size: 27px; }
.wcs { position: absolute; right: 59px; top: 193px; width: 48px; height: 18px; display: flex; align-items: center; justify-content: center; gap: 6px; background: #8b8d9c; border: 1px solid #a6a8b6; border-radius: 4px; color: #44474f; }
.navbar { position: absolute; right: 4px; top: 236px; width: 32px; height: 212px; padding: 1px 2px; display: flex; flex-direction: column; background: rgba(120, 124, 126, .7); border: 1px solid #666b6e; border-radius: 4px; }
.navbar button { display: flex; flex-direction: column; align-items: center; gap: 6px; padding-top: 3px; padding-bottom: 5px; }
.navbar button:nth-child(2) { padding-top: 9px; }
.navbar svg { fill: none; stroke: #3a4044; }
.navbar .tiny svg { stroke: none; }
.navbar .tri { border-top-color: #3a4044; }
.navbar .ruled { border-top: 1px solid #757a7c; padding: 3px 0 2px; }
.navbar .tiny { align-items: flex-end; padding: 0; }
.navbar .tiny:last-child { margin-top: auto; padding-bottom: 1px; }
.command { position: absolute; left: 20.1%; bottom: 0; width: 60.2%; font: 12px/15px "Liberation Mono", "DejaVu Sans Mono", monospace; }
.command p { width: max-content; margin: 0 0 5px 60px; padding: 0 1px; border-radius: 2px; background: #5d5d5d; color: #e4e4e4; }
.command .old { background: #505050; color: #b5b5b5; }
.command .new { background: #666; color: #fff; margin-bottom: 2px; }
.command-line { display: flex; align-items: center; height: 27px; gap: 6px; background: #fff; border: 1px solid #777; color: #000; }
.command-line > svg { margin-left: -3px; }
.command-line output { flex: 1; white-space: nowrap; }
.command-line > button { padding: 0 5px; }
.command-tools { display: flex; align-items: center; gap: 9px; width: 54px; height: 25px; padding-left: 3px; background: linear-gradient(#8b8b8b, #4c4c4c); }
.command-tools button { display: flex; }

/* layout tabs and status bar */
.status { display: flex; align-items: flex-start; justify-content: space-between; height: 29px; background: #383838; border-top: 1px solid #555; }
.layout-tabs { display: flex; padding-left: 12px; }
.layout-tabs a { height: 17px; padding: 0 11px; color: #c0c0c0; line-height: 16px; background: linear-gradient(#4d4d4d, #666); border-radius: 0 0 8px 8px; margin-right: 1px; }
.layout-tabs .active { color: #fff; font-weight: 700; background: linear-gradient(#606060, #8b8b8b); }
.layout-tabs button { width: 21px; height: 16px; margin-left: 4px; background: #5a5a5a; border-radius: 8px 0 8px 4px; display: flex; align-items: center; justify-content: center; }
.toggles { display: flex; gap: 2px; height: 27px; padding: 1px 1px 2px; }
.group { display: flex; background: #515151; border: 1px solid #7a7a7a; }
.group button { display: flex; align-items: center; justify-content: center; width: 23px; }
.group .list { width: 15px; }
.group .model { width: 49px; font-size: 12px; color: #fff; }
.group .scale { width: 34px; gap: 4px; }
.group svg { fill: none; stroke: #c4c4c4; }
.group .on { stroke: #2490ff; filter: drop-shadow(0 0 2px #1c5dc0); }
.group .solid { fill: #c4c4c4; stroke: none; }
.group .solid.on { fill: #2490ff; }
.group .dimmed { stroke: #9a9a9a; }

/* windows taskbar */
.taskbar { display: flex; height: 40px; background: #020409; font-size: 12px; color: #fff; }
.taskbar button { display: flex; align-items: center; justify-content: center; flex: none; }
.taskbar .start { width: 48px; }
.search { display: flex; align-items: center; gap: 6px; width: 344px; padding: 0 15px 0 9px; background: #333; color: #a6a6a6; font-size: 14px; }
.search input { flex: 1; min-width: 0; }
.search input::placeholder { color: #a6a6a6; opacity: 1; }
.taskbar .app-icon { width: 49px; }
.taskbar .wide-icon { width: 55px; }
.taskbar .gap { margin-left: 4px; width: 50px; }
.taskbar .task { gap: 5px; width: 152px; padding-top: 3px; border-bottom: 3px solid #76b9ed; white-space: nowrap; }
.taskbar .active { width: 160px; background: #34383d; gap: 4px; }
.tek-icon { overflow: visible; }
.tek-icon text { fill: #fff; font-size: 8px; font-weight: 700; text-anchor: middle; }
.tray { display: flex; margin-left: auto; padding-right: 13px; }
.tray button { width: 24px; }
.tray .clock { flex-direction: column; width: 64px; line-height: 18px; }
.tray .notes { width: 40px; }
```
